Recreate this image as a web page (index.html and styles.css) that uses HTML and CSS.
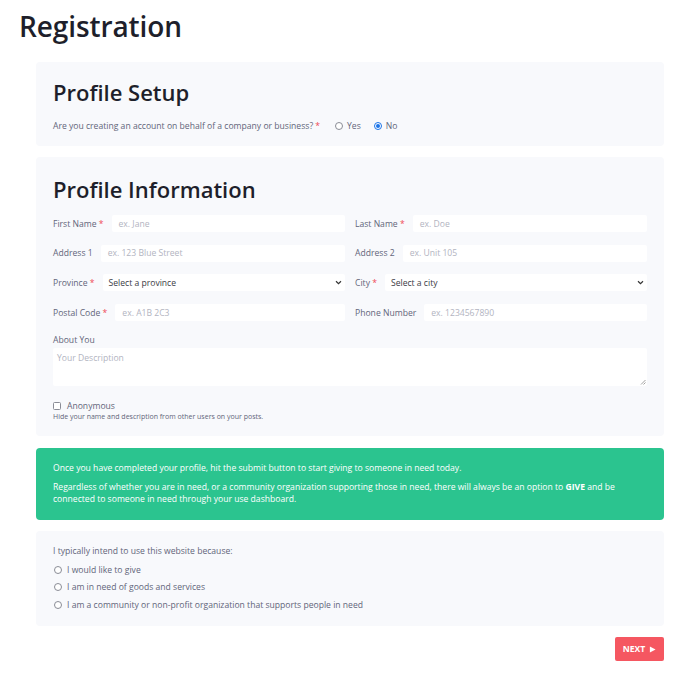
FILE: index.html
```html
<!DOCTYPE html>
<html>
<head>
<meta charset="utf-8">
<link rel="stylesheet" href="styles.css">
</head>
<body>
<div class="page">
  <h1 class="title">Registration</h1>
  <div class="wrap">
    <section class="card setup">
      <h2 class="card-title">Profile Setup</h2>
      <div class="question">
        <span class="q-text">Are you creating an account on behalf of a company or business? <span class="req">*</span></span>
        <label class="opt"><span class="radio"></span>Yes</label>
        <label class="opt"><span class="radio checked"></span>No</label>
      </div>
    </section>

    <section class="card info">
      <h2 class="card-title">Profile Information</h2>
      <div class="grid">
        <div class="field"><span class="lbl">First Name <span class="req">*</span></span><div class="input ph">ex. Jane</div></div>
        <div class="field"><span class="lbl">Last Name <span class="req">*</span></span><div class="input ph">ex. Doe</div></div>
        <div class="field"><span class="lbl">Address 1</span><div class="input ph">ex. 123 Blue Street</div></div>
        <div class="field"><span class="lbl">Address 2</span><div class="input ph">ex. Unit 105</div></div>
        <div class="field"><span class="lbl">Province <span class="req">*</span></span><div class="input select">Select a province<svg class="chev" viewBox="0 0 8 6" width="7" height="5"><path d="M1 1.5 L4 4.5 L7 1.5" fill="none" stroke="#333" stroke-width="1.4"/></svg></div></div>
        <div class="field"><span class="lbl">City <span class="req">*</span></span><div class="input select">Select a city<svg class="chev" viewBox="0 0 8 6" width="7" height="5"><path d="M1 1.5 L4 4.5 L7 1.5" fill="none" stroke="#333" stroke-width="1.4"/></svg></div></div>
        <div class="field"><span class="lbl">Postal Code <span class="req">*</span></span><div class="input ph">ex. A1B 2C3</div></div>
        <div class="field"><span class="lbl">Phone Number</span><div class="input ph">ex. 1234567890</div></div>
      </div>
      <div class="about">
        <span class="lbl">About You</span>
        <div class="textarea ph">Your Description<svg class="grip" viewBox="0 0 6 6" width="6" height="6"><path d="M5.5 1 L1 5.5 M5.5 3.5 L3.5 5.5" stroke="#888" stroke-width="0.8"/></svg></div>
      </div>
      <div class="anon">
        <label class="check-row"><span class="checkbox"></span>Anonymous</label>
        <p class="hint">Hide your name and description from other users on your posts.</p>
      </div>
    </section>

    <section class="notice">
      <p>Once you have completed your profile, hit the submit button to start giving to someone in need today.</p>
      <p>Regardless of whether you are in need, or a community organization supporting those in need, there will always be an option to <b>GIVE</b> and be connected to someone in need through your use dashboard.</p>
    </section>

    <section class="card intent">
      <p class="intent-q">I typically intend to use this website because:</p>
      <label class="opt-row"><span class="radio"></span>I would like to give</label>
      <label class="opt-row"><span class="radio"></span>I am in need of goods and services</label>
      <label class="opt-row"><span class="radio"></span>I am a community or non-profit organization that supports people in need</label>
    </section>

    <div class="actions">
      <button class="next">NEXT <svg viewBox="0 0 8 8" width="7" height="7"><path d="M1 0.5 L7.5 4 L1 7.5 Z" fill="#fff"/></svg></button>
    </div>
  </div>
</div>
</body>
</html>
```

FILE: styles.css
```css
* { box-sizing: border-box; }
body {
  margin: 0;
  background: #fff;
  font-family: "Open Sans", "DejaVu Sans", sans-serif;
  color: #62657a;
}
.page { padding: 8px 36px 0 19px; }
.title {
  margin: 0;
  font-size: 28px;
  font-weight: 600;
  color: #1e1f2b;
  line-height: 36px;
  letter-spacing: -0.1px;
}
.wrap { margin-left: 17px; margin-top: 18px; }
.card {
  background: #f8f9fc;
  border-radius: 4px;
  padding: 0 17px;
}
.card-title {
  margin: 0;
  font-size: 22px;
  font-weight: 600;
  color: #1e1f2b;
  line-height: 28px;
}
.setup { padding-top: 16px; height: 84px; }
.question {
  display: flex;
  align-items: center;
  font-size: 8.6px;
  margin-top: 14px;
}
.q-text { margin-right: 15px; }
.req { color: #ef4a55; }
.opt { display: flex; align-items: center; margin-right: 13px; }
.radio {
  display: inline-block;
  width: 8px; height: 8px;
  border: 1px solid #8a8c96;
  border-radius: 50%;
  background: #fff;
  margin-right: 4px;
  position: relative;
}
.radio.checked { border-color: #1a73e8; }
.radio.checked::after {
  content: "";
  position: absolute;
  left: 1px; top: 1px;
  width: 4px; height: 4px;
  border-radius: 50%;
  background: #1a73e8;
}
.info { margin-top: 11px; padding-top: 18px; padding-bottom: 14px; }
.grid {
  display: grid;
  grid-template-columns: 1fr 1fr;
  column-gap: 10px;
  row-gap: 12.7px;
  margin-top: 12px;
}
.field { display: flex; align-items: center; height: 17px; font-size: 8.6px; }
.lbl { white-space: nowrap; margin-right: 8px; font-size: 8.6px; }
.input {
  flex: 1;
  height: 17px;
  background: #fff;
  border-radius: 2px;
  padding: 0 7px;
  display: flex;
  align-items: center;
  font-size: 8.6px;
  color: #333;
}
.ph { color: #b2b4bf; }
.select { position: relative; padding-left: 6px; color: #3a3b45; }
.chev { position: absolute; right: 3px; top: 6px; }
.about { margin-top: 14px; font-size: 8.6px; }
.about .lbl { display: block; line-height: 11px; }
.textarea {
  margin-top: 2px;
  height: 38px;
  background: #fff;
  border-radius: 2px;
  padding: 4px 4px;
  font-size: 8.6px;
  position: relative;
}
.grip { position: absolute; right: 1px; bottom: 1px; }
.anon { margin-top: 14px; }
.check-row { display: flex; align-items: center; font-size: 8.6px; }
.checkbox {
  display: inline-block;
  width: 8px; height: 8px;
  border: 1px solid #8a8c96;
  border-radius: 1.5px;
  background: #fff;
  margin-right: 6px;
}
.hint { margin: 0; font-size: 7px; line-height: 10px; }
.notice {
  margin-top: 12px;
  background: #2bc48f;
  border-radius: 4px;
  color: #fff;
  padding: 14px 17px 14px 17px;
  font-size: 8.6px;
  height: 72px;
}
.notice p { margin: 0; line-height: 12px; }
.notice p + p { margin-top: 7px; }
.notice b { font-weight: 700; }
.intent { margin-top: 11px; padding-top: 15px; padding-bottom: 16px; font-size: 8.6px; }
.intent-q { margin: 0 0 7px; line-height: 11px; }
.opt-row { display: flex; align-items: center; height: 11px; margin-top: 6.5px; }
.opt-row .radio { margin-left: 1px; margin-right: 5px; }
.actions { display: flex; justify-content: flex-end; margin-top: 11px; }
.next {
  background: #f55761;
  color: #fff;
  border: 0;
  border-radius: 2px;
  width: 49px; height: 24px;
  font-family: inherit;
  font-weight: 700;
  font-size: 8.6px;
  display: flex;
  align-items: center;
  justify-content: center;
  gap: 4px;
  padding: 0;
}
```
